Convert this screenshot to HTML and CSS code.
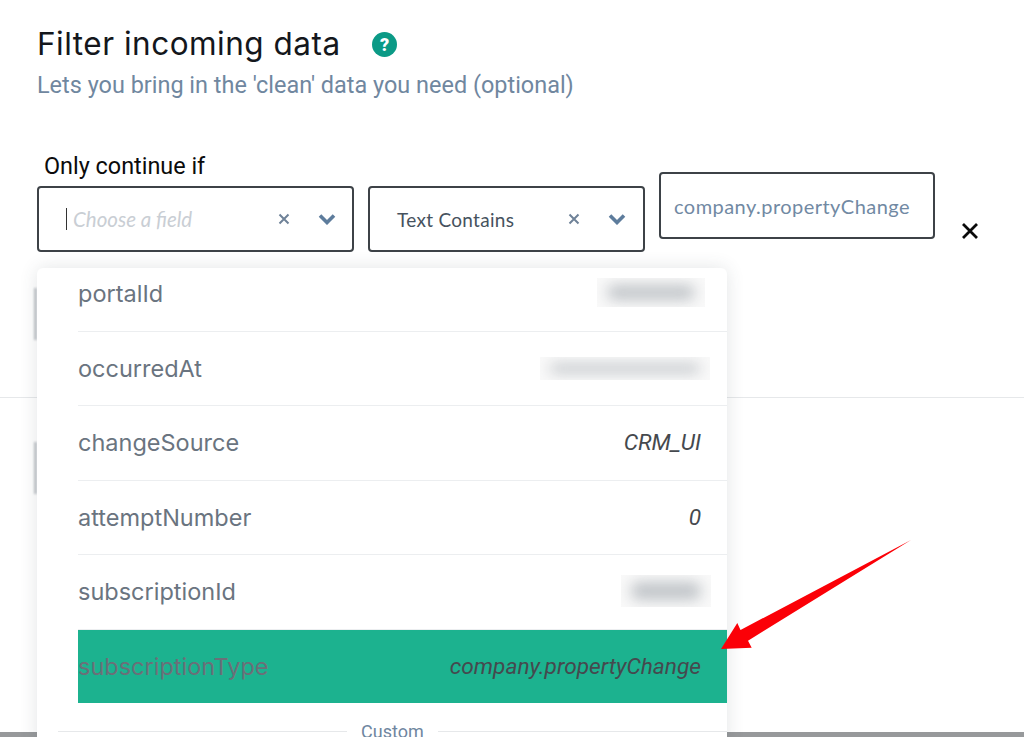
FILE: index.html
```html
<!DOCTYPE html>
<html lang="en">
<head>
<meta charset="utf-8">
<title>Filter incoming data</title>
<link rel="stylesheet" href="styles.css">
</head>
<body>
<div class="page">
  <header class="head">
    <div class="title-row">
      <h1 class="title">Filter incoming data</h1>
      <span class="help">?</span>
    </div>
    <p class="subtitle">Lets you bring in the 'clean' data you need (optional)</p>
  </header>

  <section class="filter">
    <div class="selects">
      <div class="label">Only continue if</div>
      <div class="select-row">
        <div class="select select-field">
          <span class="caret"></span>
          <span class="placeholder">Choose a field</span>
          <svg class="clear" viewBox="0 0 12 12"><path d="M1.5 1.5l9 9M10.5 1.5l-9 9"/></svg>
          <svg class="chev" viewBox="0 0 18 12"><path d="M2 2.5l7 7 7-7"/></svg>
        </div>
        <div class="select select-op">
          <span class="op-text">Text Contains</span>
          <svg class="clear" viewBox="0 0 12 12"><path d="M1.5 1.5l9 9M10.5 1.5l-9 9"/></svg>
          <svg class="chev" viewBox="0 0 18 12"><path d="M2 2.5l7 7 7-7"/></svg>
        </div>
      </div>
    </div>
    <div class="value-box">company.propertyChange</div>
    <svg class="remove" viewBox="0 0 18 18"><path d="M2 2l14 14M16 2L2 16"/></svg>
  </section>

  <div class="rule"></div>
  <div class="footer-bar"></div>
</div>

<span class="sliver sliver-a"></span>
<span class="sliver sliver-b"></span>

<div class="menu">
  <div class="item item-first"><span class="key">portalId</span><span class="mask mask-a"><i></i></span></div>
  <div class="item"><span class="key">occurredAt</span><span class="mask mask-b"><i></i></span></div>
  <div class="item"><span class="key">changeSource</span><span class="val">CRM_UI</span></div>
  <div class="item"><span class="key">attemptNumber</span><span class="val">0</span></div>
  <div class="item"><span class="key">subscriptionId</span><span class="mask mask-c"><i></i></span></div>
  <div class="item item-active"><span class="key">subscriptionType</span><span class="val">company.propertyChange</span></div>
  <div class="divider"><span>Custom</span></div>
</div>

<svg class="arrow" viewBox="0 0 1024 737"><polygon points="911,540 740.5,630 737.3,623 721,649 751.7,647.7 748,640.7"/></svg>
</body>
</html>
```

FILE: styles.css
```css
* { box-sizing: border-box; }
html, body { margin: 0; height: 737px; overflow: hidden; background: #fff; }
body { position: relative; font-family: "Roboto", sans-serif; }
.page { height: 737px; display: flex; flex-direction: column; }

.head { padding: 26px 0 0 37px; }
.title-row { display: flex; align-items: center; height: 36px; }
.title { margin: 0; font-family: "Inter", sans-serif; font-weight: 400; font-size: 31.5px; letter-spacing: 0.5px; line-height: 36px; color: #14171c; width: 335px; white-space: nowrap; }
.help { width: 25px; height: 25px; border-radius: 50%; background: #0b9a86; color: #fff; font-family: "Roboto", sans-serif; font-weight: 900; font-size: 18px; line-height: 25px; text-align: center; }
.subtitle { margin: 8px 0 0; font-size: 23.45px; line-height: 30px; color: #70879f; white-space: nowrap; }

.filter { display: flex; align-items: flex-start; padding: 52px 0 0 37px; }
.selects { display: flex; flex-direction: column; }
.label { height: 34px; padding: 1px 0 0 7px; font-size: 23.4px; line-height: 26px; color: #0b0b0b; }
.select-row { display: flex; gap: 14px; }
.select { height: 66px; border: 2px solid #3d4247; border-radius: 4px; display: flex; align-items: center; background: #fff; }
.select-field { width: 317px; padding-left: 27px; }
.select-op { width: 277px; padding-left: 27px; }
.select-field .chev { margin-right: 16px; }
.caret { width: 1px; height: 22px; background: #333; margin-right: 6px; }
.placeholder { flex: 1; font-family: "Lato", sans-serif; font-style: italic; font-size: 20.5px; color: #c9ced4; }
.op-text { flex: 1; font-family: "Lato", sans-serif; font-size: 19px; color: #46525e; letter-spacing: 0.3px; }
.clear { width: 12px; height: 12px; margin-right: 28px; fill: none; stroke: #6f8298; stroke-width: 2; }
.chev { width: 18px; height: 12px; margin-right: 17px; fill: none; stroke: #5d7c9c; stroke-width: 3.6; }
.value-box { width: 276px; height: 67px; margin: 20px 0 0 14px; border: 2px solid #3d4247; border-radius: 4px; padding-left: 13px; display: flex; align-items: center; font-family: "Lato", sans-serif; font-size: 20px; letter-spacing: 0.46px; color: #7189a3; white-space: nowrap; }
.remove { width: 18px; height: 18px; margin: 70px 0 0 26px; fill: none; stroke: #0a0a0a; stroke-width: 2.8; }

.rule { height: 1px; margin-top: 145px; background: #e6e8ea; }
.footer-bar { height: 5px; margin-top: auto; background: #97999b; }

.sliver { position: absolute; left: 34px; width: 3px; background: #c4c8cc; filter: blur(1px); }
.sliver-a { top: 288px; height: 52px; }
.sliver-b { top: 442px; height: 52px; }

.menu { position: absolute; left: 37px; top: 268px; width: 690px; height: 480px; background: #fff; border-radius: 6px 6px 0 0; box-shadow: 0 0 18px rgba(60, 70, 80, 0.14); padding-left: 41px; }
.item { height: 74.5px; display: flex; justify-content: space-between; align-items: center; border-bottom: 1px solid #eceef0; padding-right: 26px; position: relative; }
.item-first { height: 63.5px; padding-bottom: 12px; }
.key { font-family: "Inter", sans-serif; font-size: 23.5px; color: #6a7480; white-space: nowrap; }
.val { font-style: italic; font-size: 22.7px; color: #45494e; white-space: nowrap; }
.item-active { height: 73px; margin-top: 0.5px; background: #1cb28f; border-bottom: 0; }
.item-active .key { color: #6b6f78; }

.mask { position: absolute; overflow: hidden; background: #f9f9f9; }
.mask i { position: absolute; inset: 7px 10px; background: #c0c4c8; border-radius: 8px; filter: blur(7px); }
.mask-a { left: 519px; top: 10px; width: 108px; height: 29px; }
.mask-b { left: 462px; top: 25px; width: 170px; height: 23px; }
.mask-c { left: 543px; top: 20px; width: 90px; height: 32px; }

.divider { display: flex; align-items: center; margin: 20px 0 0 -20px; height: 16px; font-size: 18px; color: #6f86a0; }
.divider::before, .divider::after { content: ""; flex: 1; height: 1px; background: #e6e8ea; }
.divider::before { flex: 0 0 289px; }
.divider span { padding: 0 14px; }

.arrow { position: absolute; inset: 0; width: 1024px; height: 737px; pointer-events: none; }
.arrow polygon { fill: #fb0007; }
```
